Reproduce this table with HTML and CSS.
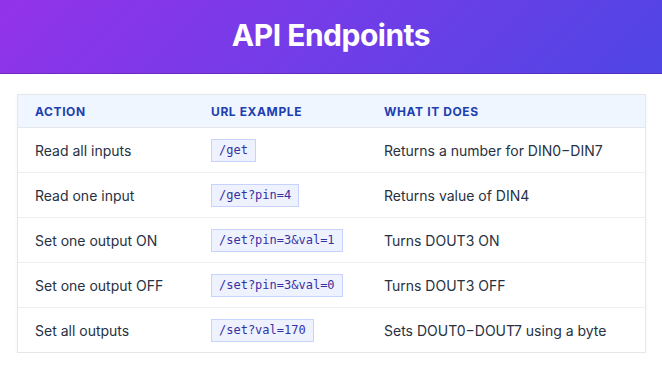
FILE: index.html
```html
<!DOCTYPE html>
<html lang="en">
<head>
<meta charset="utf-8">
<title>API Endpoints</title>
<link rel="stylesheet" href="styles.css">
</head>
<body>
<header class="banner">
  <h1 class="banner-title">API Endpoints</h1>
</header>
<main class="content">
  <div class="table">
    <div class="row row-head">
      <div class="cell">Action</div>
      <div class="cell">URL Example</div>
      <div class="cell">What it does</div>
    </div>
    <div class="row">
      <div class="cell">Read all inputs</div>
      <div class="cell"><code class="code">/get</code></div>
      <div class="cell">Returns a number for DIN0&minus;DIN7</div>
    </div>
    <div class="row">
      <div class="cell">Read one input</div>
      <div class="cell"><code class="code">/get?pin=4</code></div>
      <div class="cell">Returns value of DIN4</div>
    </div>
    <div class="row">
      <div class="cell">Set one output ON</div>
      <div class="cell"><code class="code">/set?pin=3&amp;val=1</code></div>
      <div class="cell">Turns DOUT3 ON</div>
    </div>
    <div class="row">
      <div class="cell">Set one output OFF</div>
      <div class="cell"><code class="code">/set?pin=3&amp;val=0</code></div>
      <div class="cell">Turns DOUT3 OFF</div>
    </div>
    <div class="row">
      <div class="cell">Set all outputs</div>
      <div class="cell"><code class="code">/set?val=170</code></div>
      <div class="cell">Sets DOUT0&minus;DOUT7 using a byte</div>
    </div>
  </div>
</main>
</body>
</html>
```
FILE: styles.css
```css
* { box-sizing: border-box; }

html, body {
  margin: 0;
  padding: 0;
  background: #ffffff;
  font-family: Inter, "Noto Sans", "Liberation Sans", sans-serif;
  color: #273142;
}

.banner {
  background: linear-gradient(135deg, #9333ea 0%, #4f46e5 100%);
  padding: 16px 0 19px;
  border-bottom: 1px solid rgba(88, 28, 135, 0.45);
  text-align: center;
}

.banner-title {
  margin: 0;
  font-size: 30px;
  line-height: 38px;
  font-weight: 700;
  color: #ffffff;
  letter-spacing: -0.5px;
}

.content {
  padding: 20px 16px 0 17px;
}

.table {
  border: 1px solid #e5e7eb;
  box-shadow: 0 1px 3px rgba(0, 0, 0, 0.05);
}

.row {
  display: grid;
  grid-template-columns: 176px 173px 1fr;
  align-items: center;
  height: 45px;
  border-top: 1px solid #eeeff2;
  font-size: 14px;
}

.row-head {
  height: 33px;
  border-top: 0;
  border-bottom: 1px solid #e5e7eb;
  background: #eff6ff;
  font-size: 12px;
  font-weight: 700;
  text-transform: uppercase;
  letter-spacing: 0.6px;
  color: #1e40af;
}

.row-head + .row { border-top: 0; height: 44px; }

.cell {
  padding: 0 17px;
  white-space: nowrap;
}

.code {
  display: inline-block;
  font-family: "DejaVu Sans Mono", "Liberation Mono", monospace;
  font-size: 12px;
  line-height: 17px;
  padding: 2px 7px;
  background: #eef2ff;
  border: 1px solid #c7d2fe;
  color: #3730a3;
}
```
